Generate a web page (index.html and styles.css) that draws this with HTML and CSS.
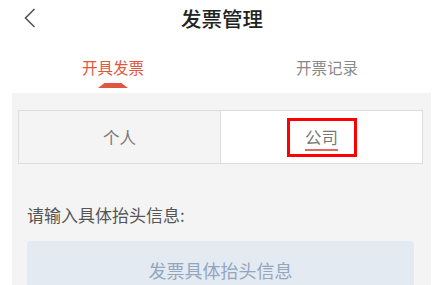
FILE: index.html
```html
<!DOCTYPE html>
<html lang="zh-CN">
<head>
<meta charset="utf-8">
<title>发票管理</title>
<link rel="stylesheet" href="styles.css">
</head>
<body>
<div class="page">
  <header class="header">
    <span class="back">
      <svg width="12" height="20" viewBox="0 0 12 20"><path d="M10.5 1 L1.5 10 L10.5 19" fill="none" stroke="#555" stroke-width="1.6"/></svg>
    </span>
    <h1 class="title">发票管理</h1>
  </header>
  <nav class="tabs">
    <div class="tab active">开具发票<span class="indicator"></span></div>
    <div class="tab">开票记录</div>
  </nav>
  <main class="panel">
    <div class="segment">
      <div class="seg-item">个人</div>
      <div class="seg-item selected"><span class="seg-box"><span class="seg-text">公司</span></span></div>
    </div>
    <div class="label">请输入具体抬头信息:</div>
    <div class="input">发票具体抬头信息</div>
  </main>
</div>
</body>
</html>
```
FILE: styles.css
```css
html, body {
  margin: 0;
  padding: 0;
  background: #ffffff;
}
body {
  font-family: "Noto Sans CJK SC", "Noto Sans", sans-serif;
  width: 442px;
  height: 285px;
  overflow: hidden;
}
.page {
  display: flex;
  flex-direction: column;
  height: 285px;
}
.header {
  position: relative;
  flex: 0 0 36px;
  display: flex;
  align-items: center;
  justify-content: center;
}
.back {
  position: absolute;
  left: 24px;
  top: 8px;
  display: flex;
}
.title {
  margin: 0 0 0 2px;
  font-size: 20.5px;
  font-weight: 500;
  color: #222;
  line-height: 34px;
}
.tabs {
  display: flex;
  flex: 0 0 57px;
  padding: 0 0 0 4px;
}
.tab {
  position: relative;
  flex: 1;
  text-align: center;
  font-size: 15.5px;
  color: #8a8a8a;
  line-height: 20px;
  padding-top: 21px;
}
.tab.active {
  color: #e0573f;
}
.tab:first-child {
  flex: 0 0 218px;
}
.tab:last-child {
  padding-right: 10px;
}
.indicator {
  position: absolute;
  left: 94px;
  top: 47px;
  width: 30px;
  height: 5px;
  background: #e0573f;
  clip-path: polygon(22% 0, 78% 0, 100% 100%, 0 100%);
}
.panel {
  flex: 1 1 auto;
  min-height: 0;
  overflow: hidden;
  margin: 0 11px 0 12px;
  background: #f4f4f4;
  padding-top: 17px;
}
.segment {
  display: flex;
  margin: 0 8px 0 6px;
  height: 54px;
  border: 1px solid #dcdcdc;
  box-sizing: border-box;
}
.seg-item {
  flex: 1;
  display: flex;
  align-items: center;
  justify-content: center;
  font-size: 16.5px;
  color: #777;
  background: #f4f4f4;
}
.seg-item.selected {
  background: #fff;
  border-left: 1px solid #dcdcdc;
}
.seg-box {
  display: flex;
  align-items: center;
  justify-content: center;
  width: 64px;
  height: 33px;
  border: 3px solid #ff0000;
}
.seg-text {
  line-height: 22px;
  border-bottom: 2px solid #e06a5a;
  padding-bottom: 1px;
  margin-top: 3px;
}
.label {
  margin: 39px 0 0 15px;
  font-size: 17px;
  line-height: 24px;
  color: #555;
}
.input {
  margin: 14px 17px 0 15px;
  height: 58px;
  background: #e3eaf2;
  border-radius: 4px;
  display: flex;
  align-items: center;
  justify-content: center;
  font-size: 18px;
  color: #94a6be;
}
```
